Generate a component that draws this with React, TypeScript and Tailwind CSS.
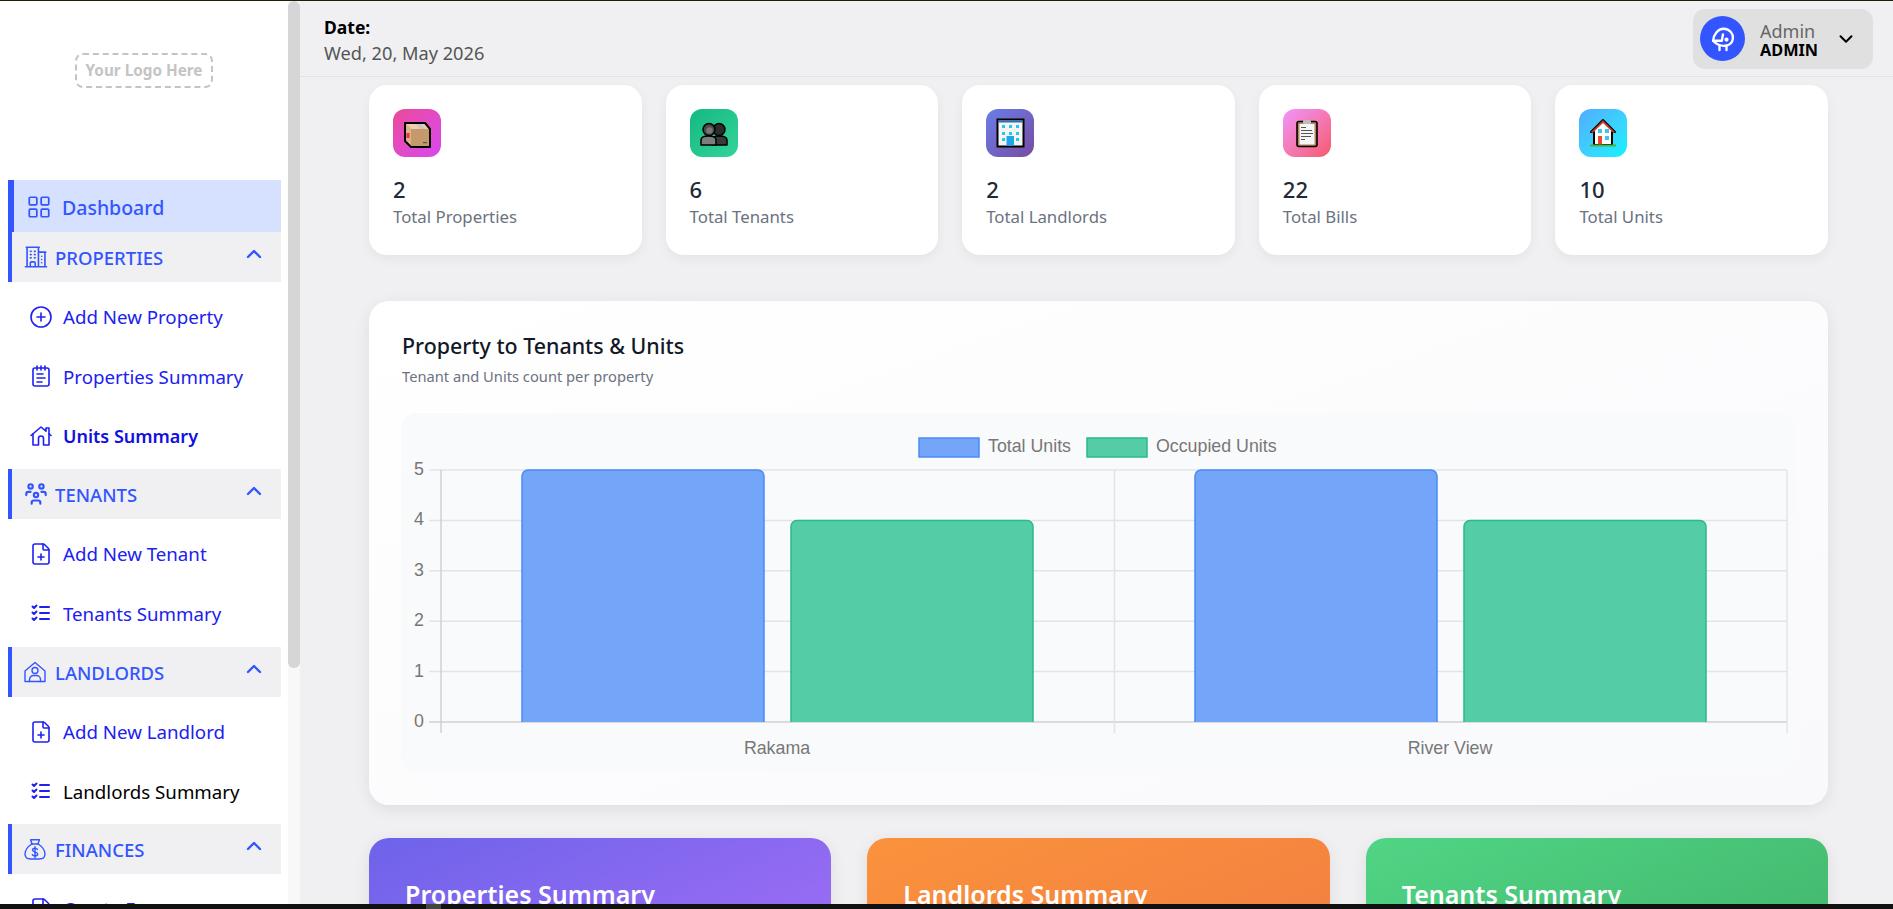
import { ChevronDown, ChevronUp, CirclePlus, FilePlus, LayoutGrid, NotepadText } from 'lucide-react'
import { HiOutlineBuildingOffice2 } from 'react-icons/hi2'
import { TbListCheck, TbUsersGroup } from 'react-icons/tb'
import type { ReactNode } from 'react'

const font = 'font-["Noto_Sans","Open_Sans",sans-serif]'

function HomeIcon({ className }: { className?: string }) {
  return (
    <svg viewBox="0 0 24 24" fill="none" stroke="currentColor" strokeWidth="1.6" strokeLinejoin="round" strokeLinecap="round" className={className}>
      <path d="M2 11.5 12 3l5 4.2V4h3v5.8l2 1.7" />
      <path d="M4 10v11h5.5v-6.5a2.5 2.5 0 0 1 5 0V21H20V10" />
    </svg>
  )
}

function LandlordIcon({ className }: { className?: string }) {
  return (
    <svg viewBox="0 0 24 24" fill="none" stroke="currentColor" strokeWidth="1.4" strokeLinejoin="round" strokeLinecap="round" className={className}>
      <path d="M2 11 12 2.5 22 11v10.5H2z" />
      <circle cx="12" cy="10.5" r="3" />
      <path d="M6.5 21.5v-2a4 4 0 0 1 4-4h3a4 4 0 0 1 4 4v2" />
    </svg>
  )
}

function MoneyBagIcon({ className }: { className?: string }) {
  return (
    <svg viewBox="0 0 24 24" fill="none" stroke="currentColor" strokeWidth="1.4" strokeLinejoin="round" strokeLinecap="round" className={className}>
      <path d="M9 7 7.6 2.8h8.8L15 7" />
      <path d="M8.6 7h6.8" />
      <path d="M8.8 7C5 9.5 2 13 2 17c0 3.2 2.4 5 5.5 5h9c3.1 0 5.5-1.8 5.5-5 0-4-3-7.5-6.8-10" />
      <path d="M14.5 12.5c-.5-.9-1.4-1.3-2.5-1.3-1.4 0-2.5.7-2.5 1.9 0 2.6 5.2 1.4 5.2 4 0 1.2-1.2 1.9-2.7 1.9-1.2 0-2.2-.5-2.7-1.4M12 9.8v10.700" />
    </svg>
  )
}

function AvatarIcon({ className }: { className?: string }) {
  return (
    <svg viewBox="0 0 24 24" fill="none" stroke="currentColor" strokeWidth="2" strokeLinecap="round" strokeLinejoin="round" className={className}>
      <path d="M3.5 13.5C4 8 8 3 12.5 3.2 18 3.4 21 7.8 20.5 11.5c-.4 3.5-2.800 6-6.500 6.300-3.500.3-7.500-1-10.500-4.300z" />
      <path d="M3.500 13.500h7.500l1-5.500" />
      <path d="M9 18v3.500M15 18v3.500" />
      <circle cx="15" cy="12.500" r=".8" fill="currentColor" />
    </svg>
  )
}

function BoxEmoji() {
  return (
    <svg viewBox="0 0 30 30" className="h-[30px] w-[30px]">
      <path d="M3 5h20l5 6v18H9l-6-6z" fill="#c49a6c" />
      <path d="M3 5h20l5 6H9z" fill="#f0cdb0" />
      <path d="M3 5l6 6v18l-6-6z" fill="#dcb38a" />
      <path d="M13 5h5l5 6h-5z" fill="#b9c4cc" opacity=".7" />
      <rect x="4.5" y="15" width="3" height="5" fill="#e8323c" />
      <rect x="21" y="24" width="4" height="1.2" fill="#555" />
      <path d="M3 5h20l5 6v18H9l-6-6z" fill="none" stroke="#000" strokeWidth="2" strokeLinejoin="round" />
    </svg>
  )
}

function PeopleEmoji() {
  return (
    <svg viewBox="0 0 30 30" className="h-[30px] w-[30px]">
      <path d="M13 27v-5c0-3 3-4 7-4s8 1 8 4v5z" fill="#3a3a3a" stroke="#000" strokeWidth="1.5" strokeLinejoin="round" />
      <circle cx="20" cy="11.5" r="6" fill="#2c2c2c" stroke="#000" strokeWidth="1.5" />
      <path d="M2 27v-5c0-3 4-4 7.5-4s7.5 1 7.5 4v5z" fill="#7d7d7d" stroke="#000" strokeWidth="1.5" strokeLinejoin="round" />
      <circle cx="10" cy="11.5" r="6" fill="#4a4a4a" stroke="#000" strokeWidth="1.5" />
      <circle cx="10.5" cy="12.5" r="3.2" fill="#777" />
    </svg>
  )
}

function OfficeEmoji() {
  const rows = [7, 14, 20]
  return (
    <svg viewBox="0 0 30 30" className="h-[30px] w-[30px]">
      <rect x="2.5" y="1.5" width="26" height="27" fill="#f4f6f6" stroke="#000" strokeWidth="2" />
      <rect x="3.5" y="2.5" width="24" height="2" fill="#2a6fb5" />
      {rows.map((y) => (
        <g key={y} fill="#27c7f4">
          <rect x="7" y={y} width="3" height="3" />
          <rect x="14" y={y} width="3" height="3" />
          <rect x="21" y={y} width="3" height="3" />
        </g>
      ))}
      <rect x="11.5" y="18" width="7.5" height="9.5" fill="#1ea7e8" />
    </svg>
  )
}

function ClipboardEmoji() {
  return (
    <svg viewBox="0 0 30 30" className="h-[30px] w-[30px]">
      <rect x="5" y="3.5" width="20" height="25" rx="2" fill="#b5835a" stroke="#000" strokeWidth="1.6" />
      <rect x="7.5" y="6" width="15" height="20.5" fill="#f5f5f5" />
      <rect x="11" y="2" width="8" height="4" rx="1" fill="#bcbcbc" />
      <g fill="#555">
        <rect x="9" y="9" width="5" height="1" />
        <rect x="9" y="12" width="11" height="1" />
        <rect x="9" y="15" width="12" height="1" />
        <rect x="9" y="18" width="10" height="1" />
        <rect x="9" y="21" width="4" height="1" />
      </g>
    </svg>
  )
}

function HouseEmoji() {
  return (
    <svg viewBox="0 0 30 30" className="h-[30px] w-[30px]">
      <path d="M15 2 3 14h3v13h18V14h3z" fill="#fff" stroke="#000" strokeWidth="2" strokeLinejoin="round" />
      <path d="M15 2 3 14l1.5 1L15 5l10.5 10 1.5-1z" fill="#c0392b" />
      <rect x="2" y="26.5" width="26" height="2" fill="#3fb83f" />
      <rect x="10" y="11" width="4" height="4" fill="#3cc6ef" />
      <rect x="17" y="11" width="4" height="4" fill="#3cc6ef" />
      <rect x="17" y="18" width="4" height="4" fill="#3cc6ef" />
      <rect x="10" y="18" width="4" height="8.5" fill="#e8482c" />
    </svg>
  )
}

function SectionHeader({ icon, title }: { icon: ReactNode; title: string }) {
  return (
    <div className="flex h-[50px] items-center border-l-4 border-[#3355ff] bg-[#f0f0f3] pl-[11px] pr-[15px] text-[#3355ff]">
      <span className="flex w-[32px] shrink-0 items-center">{icon}</span>
      <span className="flex-1 pt-[3px] text-[18.5px] font-medium leading-none">{title}</span>
      <ChevronUp className="mb-1.5 h-[24px] w-[24px]" strokeWidth={2.4} />
    </div>
  )
}

function SubItem({ icon, label, tone = 'text-[#2020f0]', bold = false }: { icon: ReactNode; label: string; tone?: string; bold?: boolean }) {
  return (
    <li className={`flex h-[59.5px] items-center pl-[15px] ${tone} ${bold ? 'text-[18px] font-semibold' : 'text-[18.7px]'}`}>
      <span className="flex w-[40px] shrink-0 items-center justify-center pr-1 text-[#2020f0]">{icon}</span>
      <span className="pt-px">{label}</span>
    </li>
  )
}

function Sidebar() {
  const sub = 'h-[24px] w-[24px]'
  const section = 'h-[26px] w-[26px]'
  return (
    <aside className="flex w-[300px] shrink-0 bg-white">
      <nav className="w-[288px] overflow-hidden">
        <div className="h-[179px] pl-[75px] pt-[52px]">
          <div className="flex h-[35px] w-[138px] items-center justify-center rounded-lg border-[2px] border-dashed border-[#c4c4c4] text-[15.3px] font-bold text-[#c4c4c4]">
            Your Logo Here
          </div>
        </div>
        <div className="pl-2 pr-[7px]">
          <div className="flex h-[52px] items-center border-l-[6px] border-[#3355ff] bg-[#d6e0ff] pl-[12px] text-[#3355ff]">
            <LayoutGrid className="mr-[10px] mt-0.5 h-[26px] w-[26px]" strokeWidth={1.6} />
            <span className="pt-[3px] text-[19.5px] font-medium">Dashboard</span>
          </div>

          <SectionHeader icon={<HiOutlineBuildingOffice2 className={section} />} title="PROPERTIES" />
          <ul className="pb-[3.5px] pt-[5px]">
            <SubItem icon={<CirclePlus className={sub} strokeWidth={1.6} />} label="Add New Property" />
            <SubItem icon={<NotepadText className={sub} strokeWidth={1.6} />} label="Properties Summary" />
            <SubItem icon={<HomeIcon className={sub} />} label="Units Summary" tone="text-[#1010e0]" bold />
          </ul>

          <SectionHeader icon={<TbUsersGroup className={section} />} title="TENANTS" />
          <ul className="pb-[4px] pt-[5px]">
            <SubItem icon={<FilePlus className={sub} strokeWidth={1.6} />} label="Add New Tenant" />
            <SubItem icon={<TbListCheck className={sub} />} label="Tenants Summary" />
          </ul>

          <SectionHeader icon={<LandlordIcon className="h-[24px] w-[24px]" />} title="LANDLORDS" />
          <ul className="pb-[3px] pt-[5px]">
            <SubItem icon={<FilePlus className={sub} strokeWidth={1.6} />} label="Add New Landlord" />
            <SubItem icon={<TbListCheck className={sub} />} label="Landlords Summary" tone="text-black" />
          </ul>

          <SectionHeader icon={<MoneyBagIcon className="h-[24px] w-[24px]" />} title="FINANCES" />
          <ul className="pt-[5px]">
            <SubItem icon={<FilePlus className={sub} strokeWidth={1.6} />} label="Create Fee" />
          </ul>
        </div>
      </nav>
      <div className="w-3 shrink-0 bg-[#f8f8f8]">
        <div className="h-[667px] rounded-full bg-[#d6d6d6]" />
      </div>
    </aside>
  )
}

function Topbar() {
  return (
    <header className="flex h-[76px] shrink-0 items-center justify-between border-b border-[#e3e3e6] pl-6 pr-5">
      <div className="mt-[2px]">
        <div className="text-[17.5px] font-bold leading-[26px] text-black">Date:</div>
        <div className="text-[18.2px] leading-[26px] text-[#555]">Wed, 20, May 2026</div>
      </div>
      <div className="flex h-[60px] w-[180px] items-center rounded-xl bg-[#e0e0e0] pl-[7px]">
        <div className="flex h-[45px] w-[45px] items-center justify-center rounded-full bg-[#3355ff] text-white">
          <AvatarIcon className="h-[28px] w-[28px]" />
        </div>
        <div className="ml-[15px] w-[71px] pt-0.5 leading-none">
          <div className="text-[18px] leading-[20px] text-[#666]">Admin</div>
          <div className="text-[16.300px] font-bold leading-[18px] text-black">ADMIN</div>
        </div>
        <ChevronDown className="ml-[4px] h-[22px] w-[22px] text-black" strokeWidth={2.2} />
      </div>
    </header>
  )
}

const stats = [
  { value: '2', label: 'Total Properties', tile: 'from-[#ec4899] to-[#d946ef]', icon: <BoxEmoji /> },
  { value: '6', label: 'Total Tenants', tile: 'from-[#10b981] to-[#34d399]', icon: <PeopleEmoji /> },
  { value: '2', label: 'Total Landlords', tile: 'from-[#667eea] to-[#764ba2]', icon: <OfficeEmoji /> },
  { value: '22', label: 'Total Bills', tile: 'from-[#f093fb] to-[#f5576c]', icon: <ClipboardEmoji /> },
  { value: '10', label: 'Total Units', tile: 'from-[#4facfe] to-[#00f2fe]', icon: <HouseEmoji /> },
]

function StatCard({ value, label, tile, icon }: (typeof stats)[number]) {
  return (
    <div className="h-[170px] rounded-[18px] bg-white pl-6 pt-6 shadow-[0_4px_12px_rgba(0,0,0,0.05)]">
      <div className={`flex h-12 w-12 items-center justify-center rounded-xl bg-gradient-to-br ${tile}`}>{icon}</div>
      <div className="mt-[16px] text-[22px] font-medium leading-[32px] text-[#1f2937]">{value}</div>
      <div className="pt-px text-[16.8px] leading-[22px] text-[#6b7280]">{label}</div>
    </div>
  )
}

// plot area is drawn in page pixels, offset from the chart box at (401, 413)
const yTicks = [5, 4, 3, 2, 1, 0]
const y0 = 309
const unit = 50.4
const axisX = 40
const midX = 713.5
const endX = 1386

function Bar({ x, value, color, line }: { x: number; value: number; color: string; line: string }) {
  const top = y0 - value * unit
  const w = 242
  const d = `M${x} ${y0}V${top + 6}a6 6 0 0 1 6-6H${x + w - 6}a6 6 0 0 1 6 6V${y0}`
  return <path d={d} fill={color} stroke={line} strokeWidth="1.5" />
}

function Chart() {
  return (
    <svg width="1395" height="360" className="block font-['Liberation_Sans',sans-serif]">
      {yTicks.map((t) => {
        const y = y0 - t * unit
        return (
          <g key={t}>
            <line x1={28} x2={endX} y1={y} y2={y} stroke={t === 0 ? '#d0d1d3' : '#e3e4e6'} strokeWidth="1.5" />
            <text x={18} y={y + 5} textAnchor="middle" fontSize="17.8" fill="#777">
              {t}
            </text>
          </g>
        )
      })}
      <line x1={axisX} x2={axisX} y1={y0 - 5 * unit} y2={320} stroke="#d0d1d3" strokeWidth="1.5" />
      <line x1={midX} x2={midX} y1={y0 - 5 * unit} y2={320} stroke="#e3e4e6" strokeWidth="1.5" />
      <line x1={endX} x2={endX} y1={y0 - 5 * unit} y2={320} stroke="#e3e4e6" strokeWidth="1.5" />

      <Bar x={121} value={5} color="#73a5f8" line="#4a8af6" />
      <Bar x={390} value={4} color="#54cda7" line="#28bb8c" />
      <Bar x={794} value={5} color="#73a5f8" line="#4a8af6" />
      <Bar x={1063} value={4} color="#54cda7" line="#28bb8c" />

      <rect x={518} y={25} width={60} height={19} fill="#73a5f8" stroke="#4a8af6" strokeWidth="1.5" />
      <text x={587} y={39} fontSize="17.8" fill="#777">
        Total Units
      </text>
      <rect x={686} y={25} width={60} height={19} fill="#54cda7" stroke="#28bb8c" strokeWidth="1.5" />
      <text x={755} y={39} fontSize="17.8" fill="#777">
        Occupied Units
      </text>

      <text x={376} y={341} textAnchor="middle" fontSize="17.8" fill="#777">
        Rakama
      </text>
      <text x={1049} y={341} textAnchor="middle" fontSize="17.8" fill="#777">
        River View
      </text>
    </svg>
  )
}

function ChartCard() {
  return (
    <section className="mt-[46px] h-[504px] rounded-[20px] bg-gradient-to-br from-white to-[#f9f9fc] pl-8 pr-8 pt-[28px] shadow-[0_4px_16px_rgba(0,0,0,0.08)]">
      <h2 className="ml-px text-[21.4px] font-medium leading-[34px] text-[#111827]">Property to Tenants &amp; Units</h2>
      <p className="ml-px text-[14.7px] leading-[26px] text-[#6b7280]">Tenant and Units count per property</p>
      <div className="mt-[24px] h-[360px] overflow-hidden rounded-2xl bg-[#f9fafb]">
        <Chart />
      </div>
    </section>
  )
}

const summaries = [
  { title: 'Properties Summary', bg: 'from-[#6c63ea] to-[#ad6ff8]' },
  { title: 'Landlords Summary', bg: 'from-[#fb923c] to-[#ef7a42]' },
  { title: 'Tenants Summary', bg: 'from-[#50d585] to-[#3fae66]' },
]

export default function App() {
  return (
    <div className={`flex h-screen flex-col overflow-hidden bg-[#f0f0f3] ${font}`}>
      <div className="h-px shrink-0 bg-[#1e1e0a]" />
      <div className="flex min-h-0 flex-1">
        <Sidebar />
        <main className="flex min-w-0 flex-1 flex-col">
          <Topbar />
          <div className="pl-[69px] pr-[65px] pt-2">
            <div className="grid grid-cols-5 gap-6">
              {stats.map((s) => (
                <StatCard key={s.label} {...s} />
              ))}
            </div>
            <ChartCard />
            <div className="mt-[33px] grid grid-cols-3 gap-9">
              {summaries.map((s) => (
                <div key={s.title} className={`h-[200px] rounded-[20px] bg-gradient-to-br px-9 pt-[39px] text-[25px] font-semibold leading-[34px] text-white shadow-[0_4px_16px_rgba(0,0,0,0.08)] ${s.bg}`}>
                  {s.title}
                </div>
              ))}
            </div>
          </div>
        </main>
      </div>
      <div className="relative h-[5px] shrink-0 bg-[#111]">
        <div className="absolute left-[426px] top-0 h-full w-[15px] bg-[#444]" />
      </div>
    </div>
  )
}
